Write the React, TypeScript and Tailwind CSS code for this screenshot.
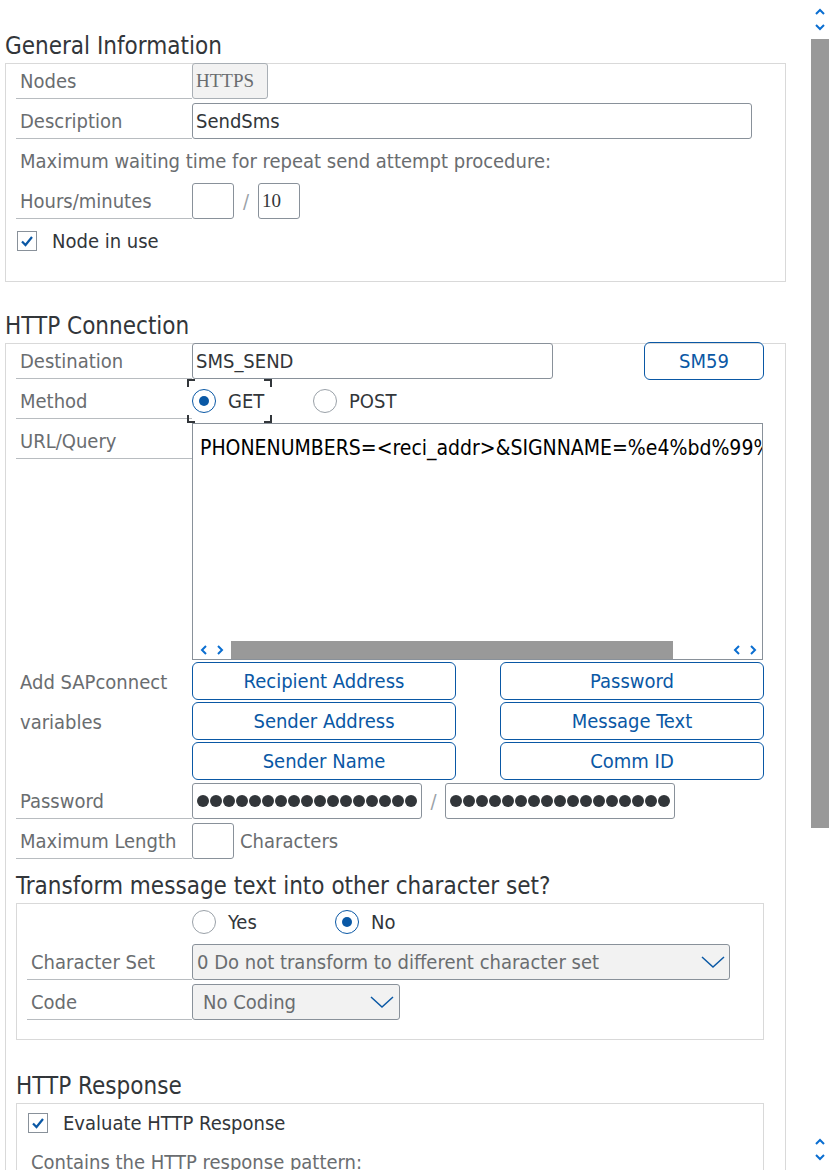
import React from "react";

const BLUE = "#0a58a5";

function Label({ children, w = "w-[176px]" }: { children: React.ReactNode; w?: string }) {
  return (
    <div className={`${w} h-[36px] shrink-0 flex items-center pl-[4px] border-b border-[#b8bcc0] text-[#6a6d70]`}>
      {children}
    </div>
  );
}

function Field({ w, children, className = "" }: { w: string; children?: React.ReactNode; className?: string }) {
  return (
    <div
      className={`${w} h-[36px] shrink-0 flex items-center px-[3px] border border-[#89919a] rounded-[3px] text-[#32363a] overflow-hidden ${className}`}
    >
      {children}
    </div>
  );
}

function Checkbox() {
  return (
    <div className="w-[20px] h-[20px] shrink-0 border border-[#89919a] flex items-center justify-center">
      <svg width="16" height="16" viewBox="0 0 16 16">
        <polyline points="3,8.5 6.5,12 13,4" fill="none" stroke={BLUE} strokeWidth="2.2" />
      </svg>
    </div>
  );
}

function Radio({ on }: { on?: boolean }) {
  return (
    <div
      className={`w-[24px] h-[24px] shrink-0 rounded-full flex items-center justify-center border-[1.5px] ${
        on ? "border-[#0a58a5]" : "border-[#9aa1a8]"
      }`}
    >
      {on && <div className="w-[10px] h-[10px] rounded-full bg-[#0a58a5]" />}
    </div>
  );
}

function Chevron({ dir, size = 10 }: { dir: "up" | "down" | "left" | "right"; size?: number }) {
  const pts = {
    up: "1,7 5,3 9,7",
    down: "1,3 5,7 9,3",
    left: "7,1 3,5 7,9",
    right: "3,1 7,5 3,9",
  }[dir];
  return (
    <svg width={size} height={size} viewBox="0 0 10 10">
      <polyline points={pts} fill="none" stroke="#0a6ed1" strokeWidth="2" />
    </svg>
  );
}

function SelectChevron() {
  return (
    <svg width="24" height="14" viewBox="0 0 24 14">
      <polyline points="1,2 12,12 23,2" fill="none" stroke={BLUE} strokeWidth="1.5" />
    </svg>
  );
}

function Dots() {
  return (
    <div className="flex gap-[1px] overflow-hidden">
      {Array.from({ length: 19 }).map((_, i) => (
        <div key={i} className="w-[12px] h-[12px] shrink-0 rounded-full bg-[#32363a]" />
      ))}
    </div>
  );
}

function VarButton({ children }: { children: React.ReactNode }) {
  return (
    <div className="h-[38px] flex items-center justify-center border border-[#0a58a5] rounded-[6px] text-[#0a58a5]">
      {children}
    </div>
  );
}

function Heading({ children, className = "" }: { children: React.ReactNode; className?: string }) {
  return <div className={`h-[35px] flex items-center text-[24px] text-[#32363a] ${className}`}>{children}</div>;
}

export default function App() {
  return (
    <div className="flex w-[830px] h-[1170px] overflow-hidden bg-white text-[20px] font-['DejaVu_Sans_Condensed','DejaVu_Sans',sans-serif]">
      <div className="w-[810px] shrink-0 pl-[5px] pt-[28px]">
        <Heading>General Information</Heading>

        {/* General Information */}
        <div className="w-[781px] h-[219px] border border-[#d9d9d9] pl-[10px] flex flex-col gap-[4px]">
          <div className="flex -mt-px">
            <Label>Nodes</Label>
            <div className="w-[76px] h-[36px] flex items-center px-[3px] bg-[#f2f2f2] border border-[#a9afb5] rounded-[3px] text-[#6a6d70] text-[19px] font-['Liberation_Serif',serif]">
              HTTPS
            </div>
          </div>
          <div className="flex">
            <Label>Description</Label>
            <Field w="w-[560px]">SendSms</Field>
          </div>
          <div className="h-[36px] flex items-center pl-[4px] text-[#6a6d70]">
            Maximum waiting time for repeat send attempt procedure:
          </div>
          <div className="flex items-center">
            <Label>Hours/minutes</Label>
            <Field w="w-[42px]" />
            <div className="w-[24px] text-center text-[#9aa1a8]">/</div>
            <Field w="w-[42px]" className="font-['Liberation_Serif',serif] text-[19px]">
              10
            </Field>
          </div>
          <div className="h-[36px] flex items-center gap-[15px] pl-[1px] text-[#32363a]">
            <Checkbox />
            <span>Node in use</span>
          </div>
        </div>

        <Heading className="mt-[26px]">HTTP Connection</Heading>

        {/* HTTP Connection */}
        <div className="w-[781px] h-[900px] border-l border-t border-r border-[#d9d9d9] pl-[10px] pr-[21px]">
          <div className="flex items-center h-[36px] -mt-px">
            <Label>Destination</Label>
            <Field w="w-[361px]">SMS_SEND</Field>
            <div className="ml-auto w-[120px] h-[38px] shrink-0 flex items-center justify-center border border-[#0a58a5] rounded-[6px] text-[#0a58a5]">
              SM59
            </div>
          </div>

          <div className="flex items-center mt-[4px]">
            <Label>Method</Label>
            <div className="relative w-[80px] h-[36px] flex items-center gap-[12px] text-[#32363a]">
              <Radio on />
              <span>GET</span>
              <span className="absolute left-[-5px] top-[-4px] w-[8px] h-[8px] border-l-2 border-t-2 border-[#32363a]" />
              <span className="absolute right-0 top-[-4px] w-[8px] h-[8px] border-r-2 border-t-2 border-[#32363a]" />
              <span className="absolute left-[-5px] bottom-[-4px] w-[8px] h-[8px] border-l-2 border-b-2 border-[#32363a]" />
              <span className="absolute right-0 bottom-[-4px] w-[8px] h-[8px] border-r-2 border-b-2 border-[#32363a]" />
            </div>
            <div className="ml-[41px] flex items-center gap-[12px] text-[#32363a]">
              <Radio />
              <span>POST</span>
            </div>
          </div>

          <div className="flex items-start mt-[4px]">
            <Label>URL/Query</Label>
            <div className="w-[571px] h-[237px] border border-[#89919a] flex flex-col overflow-hidden">
              <div className="flex-1 pl-[7px] pt-[6px] leading-[36px] text-[21px] text-black whitespace-nowrap overflow-hidden">
                PHONENUMBERS=&lt;reci_addr&gt;&amp;SIGNNAME=%e4%bd%99%e9%a2%9d
              </div>
              <div className="h-[18px] flex items-center">
                <div className="w-[38px] flex items-center justify-center gap-[6px]">
                  <Chevron dir="left" />
                  <Chevron dir="right" />
                </div>
                <div className="w-[442px] h-[18px] bg-[#999999]" />
                <div className="flex-1 flex items-center justify-end gap-[6px] pr-[4px]">
                  <Chevron dir="left" />
                  <Chevron dir="right" />
                </div>
              </div>
            </div>
          </div>

          <div className="flex mt-[2px]">
            <div className="w-[176px] shrink-0 text-[#6a6d70] pl-[4px]">
              <div className="h-[40px] flex items-center">Add SAPconnect</div>
              <div className="h-[40px] flex items-center">variables</div>
            </div>
            <div className="grid grid-cols-[264px_264px] gap-x-[44px] gap-y-[2px]">
              <VarButton>Recipient Address</VarButton>
              <VarButton>Password</VarButton>
              <VarButton>Sender Address</VarButton>
              <VarButton>Message Text</VarButton>
              <VarButton>Sender Name</VarButton>
              <VarButton>Comm ID</VarButton>
            </div>
          </div>

          <div className="flex items-center mt-[3px]">
            <Label>Password</Label>
            <Field w="w-[230px]" className="px-[4px]">
              <Dots />
            </Field>
            <div className="w-[23px] text-center text-[#9aa1a8]">/</div>
            <Field w="w-[230px]" className="px-[4px] border-[#0a58a5]">
              <Dots />
            </Field>
          </div>

          <div className="flex items-center mt-[4px]">
            <Label>Maximum Length</Label>
            <Field w="w-[42px]" />
            <span className="ml-[6px] text-[#6a6d70]">Characters</span>
          </div>

          <Heading className="mt-[9px]">Transform message text into other character set?</Heading>

          {/* Character set box */}
          <div className="w-[748px] h-[137px] border border-[#d9d9d9] pl-[10px]">
            <div className="h-[36px] flex items-center pl-[165px] text-[#32363a]">
              <div className="w-[143px] flex items-center gap-[12px]">
                <Radio />
                <span>Yes</span>
              </div>
              <div className="flex items-center gap-[12px]">
                <Radio on />
                <span>No</span>
              </div>
            </div>
            <div className="flex items-center mt-[4px]">
              <Label w="w-[165px]">Character Set</Label>
              <div className="w-[538px] h-[36px] flex items-center justify-between pl-[4px] pr-[4px] bg-[#f2f2f2] border border-[#89919a] rounded-[3px] text-[#6a6d70]">
                <span>0 Do not transform to different character set</span>
                <SelectChevron />
              </div>
            </div>
            <div className="flex items-center mt-[4px]">
              <Label w="w-[165px]">Code</Label>
              <div className="w-[208px] h-[36px] flex items-center justify-between pl-[10px] pr-[5px] bg-[#f2f2f2] border border-[#89919a] rounded-[3px] text-[#6a6d70]">
                <span>No Coding</span>
                <SelectChevron />
              </div>
            </div>
          </div>

          <Heading className="mt-[28px]">HTTP Response</Heading>

          <div className="w-[748px] h-[200px] border-l border-t border-r border-[#d9d9d9] pl-[10px]">
            <div className="h-[38px] flex items-center gap-[15px] pl-[1px] text-[#32363a]">
              <Checkbox />
              <span>Evaluate HTTP Response</span>
            </div>
            <div className="h-[40px] flex items-center pl-[4px] text-[#6a6d70]">
              Contains the HTTP response pattern:
            </div>
          </div>
        </div>
      </div>

      {/* vertical scrollbar */}
      <div className="w-[20px] shrink-0 flex flex-col items-center">
        <div className="h-[36px] flex flex-col items-center justify-center gap-[5px] pt-[2px]">
          <Chevron dir="up" />
          <Chevron dir="down" />
        </div>
        <div className="w-[18px] h-[789px] mt-[3px] bg-[#999999]" />
        <div className="mt-auto mb-[3px] h-[36px] flex flex-col items-center justify-center gap-[5px]">
          <Chevron dir="up" />
          <Chevron dir="down" />
        </div>
      </div>
    </div>
  );
}
